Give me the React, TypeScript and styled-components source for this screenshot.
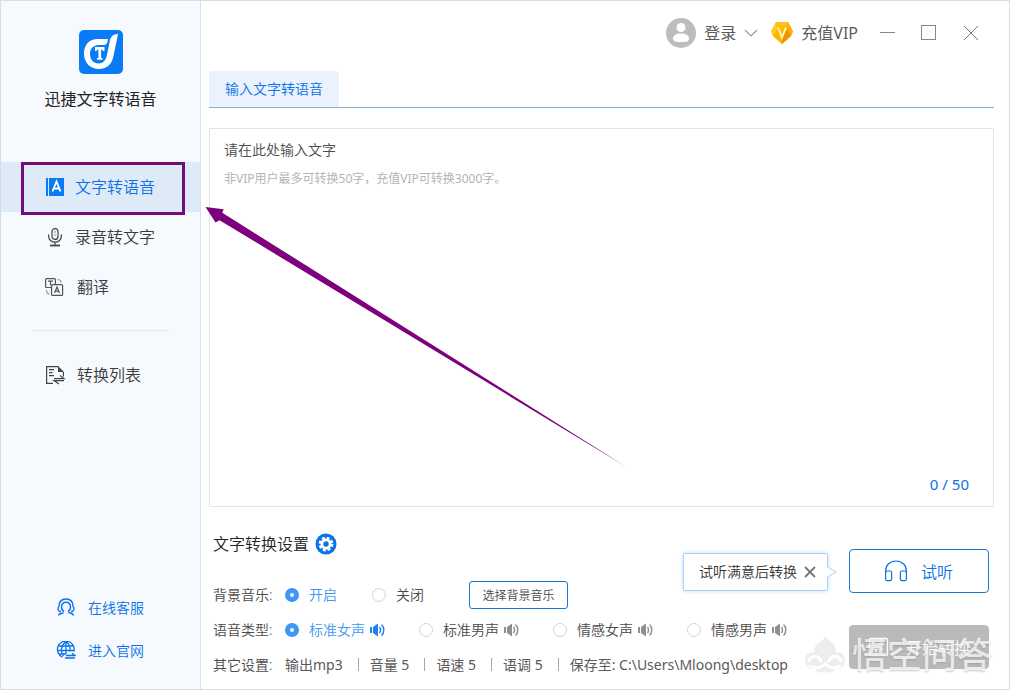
import React, { useState } from "react";
import styled, { createGlobalStyle } from "styled-components";

const Global = createGlobalStyle`
  *, *::before, *::after { box-sizing: border-box; }
  body { margin: 0; background: #fff; }
  body, button, input, textarea {
    font-family: "Noto Sans", "Noto Sans CJK SC", sans-serif;
    font-weight: 350;
  }
  button { cursor: pointer; }
`;

const BLUE = "#0b72e7";

const Window = styled.div`
  position: relative;
  display: flex;
  min-height: 100vh;
  border: 1px solid #d9dce0;
  color: #4a4a4a;
  font-size: 14px;
  line-height: 20px;
`;

const Sidebar = styled.aside`
  display: flex;
  flex-direction: column;
  flex: none;
  width: 200px;
  padding: 29px 0 28px;
  background: #f6faff;
  border-right: 1px solid #d3e2ee;
`;

const Brand = styled.div`
  display: flex;
  flex-direction: column;
  align-items: center;
  gap: 13px;
  margin-bottom: 51px;
`;

const BrandName = styled.h1`
  margin: 0;
  color: #222;
  font-size: 16px;
  font-weight: 400;
  line-height: 24px;
`;

const Nav = styled.nav`
  display: flex;
  flex-direction: column;
`;

const NavItem = styled.button<{ $active?: boolean }>`
  position: relative;
  display: flex;
  align-items: center;
  gap: 11px;
  height: 50px;
  padding: 0 0 0 43px;
  border: 0;
  background: ${(p) => (p.$active ? "#dfeaf8" : "transparent")};
  color: ${(p) => (p.$active ? BLUE : "#3c3c3c")};
  font-size: 16px;
  line-height: 24px;
  text-align: left;
`;

const Marker = styled.span`
  position: absolute;
  top: 0;
  left: 20px;
  right: 15px;
  height: 53px;
  border: 3px solid #720c78;
  pointer-events: none;
  z-index: 1;
`;

const Divider = styled.hr`
  width: 138px;
  height: 1px;
  margin: 18px 0 19px 31px;
  border: 0;
  background: #e3e9f0;
`;

const SideLinks = styled.div`
  display: flex;
  flex-direction: column;
  gap: 23px;
  margin-top: auto;
  padding-left: 54px;
`;

const SideLink = styled.a`
  display: flex;
  align-items: center;
  gap: 12px;
  color: ${BLUE};
  text-decoration: none;
`;

const Main = styled.main`
  display: flex;
  flex-direction: column;
  flex: 1;
  min-width: 0;
  padding: 0 15px 0 8px;
`;

const TitleBar = styled.header`
  display: flex;
  align-items: center;
  justify-content: flex-end;
  height: 64px;
  margin-bottom: 6px;
  padding-right: 15px;
`;

const BarButton = styled.button`
  display: flex;
  align-items: center;
  gap: 8px;
  margin-right: 13px;
  padding: 0;
  border: 0;
  background: none;
  color: #5c5c5c;
  font-size: 16px;
  font-weight: 400;
  line-height: 24px;
`;

const WindowButtons = styled.div`
  display: flex;
  gap: 26px;
  margin-left: 9px;
`;

const IconButton = styled.button`
  display: flex;
  padding: 0;
  border: 0;
  background: none;
`;

const Tabs = styled.div`
  display: flex;
  border-bottom: 1px solid #85b3d6;
`;

const Tab = styled.button`
  height: 36px;
  padding: 0 16px;
  border: 0;
  border-radius: 3px 3px 0 0;
  background: #eaf2fe;
  color: ${BLUE};
  font-size: 14px;
  line-height: 20px;
`;

const Editor = styled.section`
  display: grid;
  flex: 1;
  min-height: 240px;
  margin-top: 20px;
  border: 1px solid #dbe5ef;
`;

const EditorInput = styled.textarea`
  grid-area: 1 / 1;
  width: 100%;
  padding: 11px 14px;
  border: 0;
  outline: 0;
  resize: none;
  background: transparent;
  color: #444;
  font-size: 14px;
  line-height: 20px;
  &::placeholder { color: #4a4a4a; opacity: 1; }
`;

const EditorHint = styled.p`
  grid-area: 1 / 1;
  align-self: start;
  margin: 40px 14px 0;
  color: #b4b4b4;
  font-size: 12px;
  font-weight: 400;
  line-height: 20px;
  pointer-events: none;
`;

const Counter = styled.output`
  grid-area: 1 / 1;
  place-self: end;
  margin: 0 24px 12px;
  color: ${BLUE};
  font-size: 15px;
  font-weight: 400;
  line-height: 20px;
`;

const Footer = styled.section`
  display: grid;
  grid-template-columns: minmax(0, 1fr) 140px;
  padding: 24px 5px 7px 4px;
`;

const Settings = styled.div`
  display: flex;
  flex-direction: column;
  min-width: 0;
  white-space: nowrap;
`;

const SettingsTitle = styled.h2`
  display: flex;
  align-items: center;
  gap: 6px;
  margin: 0 0 20px;
  color: #222;
  font-size: 16px;
  font-weight: 350;
  line-height: 26px;
`;

const Row = styled.div`
  display: flex;
  align-items: center;
  height: 35px;
`;

const RowLabel = styled.span`
  flex: none;
  width: 72px;
`;

const Option = styled.label<{ $width: number; $on: boolean }>`
  display: flex;
  align-items: center;
  flex: none;
  width: ${(p) => p.$width}px;
  color: ${(p) => (p.$on ? "#3e97f7" : "#4a4a4a")};
`;

const Radio = styled.input`
  appearance: none;
  width: 14px;
  height: 14px;
  margin: 0 10px 0 0;
  border: 1px solid #d4d4d4;
  border-radius: 50%;
  background: #fff;
  &:checked { border: 5px solid #3e97f7; }
`;

const SpeakerButton = styled.button`
  display: flex;
  padding: 0 0 0 5px;
  border: 0;
  background: none;
`;

const MusicButton = styled.button`
  height: 28px;
  margin-left: 10px;
  padding: 0;
  width: 99px;
  border: 1px solid #1c78cf;
  border-radius: 3px;
  background: #fff;
  color: #4a4a4a;
  font-size: 12px;
`;

const Detail = styled.span`
  display: flex;
  align-items: center;
  color: #5a5a5a;
  font-weight: 400;
  &:not(:last-child)::after {
    content: "";
    width: 1px;
    height: 13px;
    margin: 0 11px 0 15px;
    background: #a8a8a8;
  }
`;

const Actions = styled.div`
  display: flex;
  flex-direction: column;
  gap: 32px;
  padding-top: 18px;
`;

const ActionSlot = styled.div`
  position: relative;
`;

const ActionButton = styled.button<{ $muted?: boolean }>`
  display: flex;
  align-items: center;
  gap: ${(p) => (p.$muted ? 17 : 13)}px;
  width: 100%;
  height: 44px;
  padding: 0 0 0 ${(p) => (p.$muted ? 18 : 34)}px;
  border: 1px solid ${(p) => (p.$muted ? "#bababa" : "#1c78cf")};
  border-radius: 4px;
  background: ${(p) => (p.$muted ? "#bababa" : "#fff")};
  color: ${(p) => (p.$muted ? "#fff" : BLUE)};
  font-size: 16px;
`;

const Bubble = styled.div`
  position: absolute;
  top: 4px;
  right: 161px;
  display: flex;
  align-items: center;
  gap: 7px;
  width: 145px;
  height: 38px;
  padding-left: 15px;
  border: 1px solid #acd0f6;
  border-radius: 2px;
  background: #fff;
  box-shadow: 0 0 4px #bcdafa;
  color: #333;
  white-space: nowrap;
`;

const BubbleTip = styled.svg`
  position: absolute;
  left: 142px;
  top: 9px;
`;

const Watermark = styled.div`
  position: absolute;
  right: 17px;
  bottom: 12px;
  display: flex;
  align-items: center;
  gap: 6px;
  color: rgba(255, 255, 255, 0.75);
  font-size: 35px;
  font-weight: 500;
  line-height: 44px;
  text-shadow: 0 1px 2px rgba(130, 130, 130, 0.45);
  pointer-events: none;
`;

const Pointer = styled.svg`
  position: absolute;
  left: 203px;
  top: 204px;
  pointer-events: none;
`;

const Logo = () => (
  <svg width="44" height="44" viewBox="0 0 44 44" aria-hidden="true">
    <rect width="44" height="44" rx="5" fill="#087bf5" />
    <path
      d="M29 9H19C10 9 5 15 5 23.500c0 9 6 15.500 15 15.500 8 0 13-5 14.500-13L39 4c-4 0-7 2-8 6l-3 15c-1 5-4 8.500-8.500 8.500-5 0-8.500-4-8.500-9.500 0-5.500 3.500-9 9-9h5.500c2 0 3.200-3 3.500-6z"
      fill="#fff"
    />
    <path d="M16 17h9.500v4H24l-.5-1.300h-1.400V28h1.400v1.800h-5.500V28h1.400v-8.300H18L17.500 21H16z" fill="#fff" />
  </svg>
);

const BookIcon = () => (
  <svg width="20" height="20" viewBox="0 0 20 20" aria-hidden="true">
    <path d="M2 1h2v18H2zM5 1h15v18H5z" fill="#087bf5" />
    <path d="M8.500 14.500 12.500 4.500 16.500 14.500M9.800 11.500h5.400" fill="none" stroke="#fff" strokeWidth="1.800" />
  </svg>
);

const MicIcon = () => (
  <svg width="20" height="20" viewBox="0 0 20 20" fill="none" stroke="#444" strokeWidth="1.200" aria-hidden="true">
    <rect x="8" y="1.600" width="6" height="10.800" rx="3" />
    <path d="M4.600 7.500v1.700a6.400 6 0 0 0 12.800 0V7.500M11 15.200v3" />
    <path d="M6 18.500h10" strokeWidth="1.800" />
    <path d="M11 4.500v1M11 7.500v1" />
  </svg>
);

const TranslateIcon = () => (
  <svg width="22" height="20" viewBox="0 0 22 20" fill="none" stroke="#555" strokeWidth="1.200" aria-hidden="true">
    <path d="M7.500 10.500h-5A1 1 0 0 1 1.600 9.500V2.600a1 1 0 0 1 1-1h7.800a1 1 0 0 1 1 1V7.500" />
    <rect x="7.600" y="7.600" width="11" height="10.800" rx="1" />
    <path d="M4 4.200h5M6.500 4.200V8.500M10.500 16l2.500-6 2.500 6M11.300 14.200h3.400" />
    <path d="M13.500 2.500c2 0 3.500 1 3.500 3.200M2.500 13c0 2.500 1.200 4 3.500 4" stroke="#999" />
  </svg>
);

const ListIcon = () => (
  <svg width="22" height="20" viewBox="0 0 22 20" fill="none" stroke="#444" strokeWidth="1.200" aria-hidden="true">
    <path d="M9 18.400H2.600V1.600h12M19.400 7v4.500" />
    <path d="M14 1v6h6z" fill="#444" stroke="none" />
    <path d="M5 4.600h5M5 7.600h3.500M5 10.600h5" />
    <path d="M10 13.600h10l-4-3M20 15.600H10l5 3.400" />
  </svg>
);

const ServiceIcon = () => (
  <svg width="21" height="20" viewBox="0 0 21 20" fill="none" stroke={BLUE} strokeWidth="1.400" aria-hidden="true">
    <path d="M6 13.500H4.500C2.800 12.500 2.600 9.500 4 8.500 4 4 6.500 1 11 1s7 3 7 7.500c1.400 1 1.200 4-.5 5H16" />
    <path d="M9 13.500C7.300 12.800 6.500 11 6.500 9c0-3 1.700-4.800 4.500-4.800s4.500 1.800 4.500 4.800c0 2-.8 3.800-2.500 4.500M3.500 17.500c.5-1.500 2-2.300 5-2.500M13.500 14.500c3 .5 4.500 1.500 5 3" />
  </svg>
);

const GlobeIcon = () => (
  <svg width="21" height="20" viewBox="0 0 21 20" fill="none" stroke={BLUE} strokeWidth="1.300" aria-hidden="true">
    <path d="M7.500 16.200A8.400 8.400 0 1 1 19 10.500M4 5h14M2.500 9.500h16.500M4 13h7M11 .5V13M8.500 15c-3.500-4.500-2.500-10.500 2.500-14.500 4 3 4.500 6 4 10" />
    <path d="M11 14.500h9l-3-2.300M20 17H10" />
  </svg>
);

const AvatarIcon = () => (
  <svg width="30" height="30" viewBox="0 0 30 30" aria-hidden="true">
    <circle cx="15" cy="15" r="15" fill="#bdbdbd" />
    <circle cx="15" cy="9.500" r="4.500" fill="#fff" />
    <path d="M7 20.500c0-3 3-5 8-5s8 2 8 5-3 3.500-8 3.500-8-.5-8-3.500z" fill="#fff" />
  </svg>
);

const GemIcon = () => (
  <svg width="22" height="22" viewBox="0 0 22 22" aria-hidden="true">
    <path d="M5 0h12l5 9.500-2 4.500-9 8-9-8-2-4.500z" fill="#fdb913" />
    <path d="M5 0h12l-3 4H8z" fill="#fdc020" />
    <path d="M17 0l5 9.500-2 4.500-4-7z" fill="#f9b000" />
    <path d="M20 14l-9 8v-6l5-9z" fill="#ee9200" />
    <path d="M2 14l9 8v-6L6 7z" fill="#ffb400" />
    <path d="M5 0 0 9.500 2 14l4-7z" fill="#ffcc1e" />
    <path d="M7 5.500l4 10 4-10" fill="none" stroke="#fff6a8" strokeWidth="2" />
  </svg>
);

const GearIcon = () => (
  <svg width="22" height="22" viewBox="0 0 22 22" aria-hidden="true">
    <circle cx="11" cy="11" r="10.500" fill="#0b72e7" />
    <circle cx="11" cy="11" r="5.500" fill="#fff" />
    <circle cx="11" cy="11" r="6" fill="none" stroke="#fff" strokeWidth="2.800" strokeDasharray="2.800 1.912" />
    <circle cx="11" cy="11" r="2.700" fill="#0b72e7" />
  </svg>
);

const SpeakerIcon = ({ color }: { color: string }) => (
  <svg width="15" height="14" viewBox="0 0 15 14" fill="none" stroke={color} aria-hidden="true">
    <path d="M0 4h2v6H0zM3 4l5-3.500v13L3 10z" fill={color} stroke="none" />
    <path d="M9.500 4c1.300 1.500 1.300 4.500 0 6M11.500 1.500c3 2.500 3 8.500 0 11" strokeWidth="1.500" />
  </svg>
);

const HeadphonesIcon = () => (
  <svg width="24" height="22" viewBox="0 0 24 22" fill="none" stroke={BLUE} strokeWidth="1.200" aria-hidden="true">
    <path d="M1.600 12.500V11C1.600 5 6 1 12 1s10.400 4 10.400 10v1.500" />
    <rect x="1.600" y="11" width="6" height="9.600" rx="1.600" />
    <rect x="16.400" y="11" width="6" height="9.600" rx="1.600" />
  </svg>
);

const ConvertIcon = () => (
  <svg width="21" height="20" viewBox="0 0 21 20" fill="none" stroke="#fff" strokeWidth="1.400" aria-hidden="true">
    <rect x="1.500" y="1.500" width="18" height="17" rx="1.500" />
    <path d="M6 7h9l-3-3M15 12H6l3 3" />
  </svg>
);

const CloudFace = () => (
  <svg width="42" height="40" viewBox="0 0 42 40" aria-hidden="true">
    <path
      d="M21 1c1 4 8 4 10 11 1 2 1 3 0 5 6 0 10 3 10 8 0 6-5 10-10 9-3 5-7 4-10 2-3 2-7 3-10-2-5 1-10-3-10-9 0-5 4-8 10-8-3-8 8-9 10-16z"
      fill="#e9e9e9"
      opacity=".8"
    />
    <path
      d="M5 26c2-6 10-6 12 0M25 26c2-6 10-6 12 0M6 31c5 3 11 2 15-2 4 4 10 5 15 2"
      fill="none"
      stroke="#fff"
      strokeWidth="3"
      strokeLinecap="round"
    />
  </svg>
);

const VOICES = ["标准女声", "标准男声", "情感女声", "情感男声"];
const MUSIC = ["开启", "关闭"];
const DETAILS = ["输出mp3", "音量 5", "语速 5", "语调 5", "保存至: C:\\Users\\Mloong\\desktop"];

export default function App() {
  const [text, setText] = useState("");
  const [music, setMusic] = useState(MUSIC[0]);
  const [voice, setVoice] = useState(VOICES[0]);

  return (
    <>
      <Global />
      <Window>
        <Sidebar>
          <Brand>
            <Logo />
            <BrandName>迅捷文字转语音</BrandName>
          </Brand>
          <Nav>
            <NavItem $active>
              <BookIcon />
              文字转语音
              <Marker />
            </NavItem>
            <NavItem>
              <MicIcon />
              录音转文字
            </NavItem>
            <NavItem>
              <TranslateIcon />
              翻译
            </NavItem>
            <Divider />
            <NavItem>
              <ListIcon />
              转换列表
            </NavItem>
          </Nav>
          <SideLinks>
            <SideLink href="#service">
              <ServiceIcon />
              在线客服
            </SideLink>
            <SideLink href="#site">
              <GlobeIcon />
              进入官网
            </SideLink>
          </SideLinks>
        </Sidebar>

        <Main>
          <TitleBar>
            <BarButton>
              <AvatarIcon />
              登录
              <svg width="14" height="8" viewBox="0 0 14 8" fill="none" stroke="#999" strokeWidth="1.200" aria-hidden="true">
                <path d="M1 1l6 6 6-6" />
              </svg>
            </BarButton>
            <BarButton>
              <GemIcon />
              充值VIP
            </BarButton>
            <WindowButtons>
              <IconButton aria-label="最小化">
                <svg width="15" height="16" viewBox="0 0 15 16" stroke="#8a8a8a">
                  <path d="M0 7.500h15" />
                </svg>
              </IconButton>
              <IconButton aria-label="最大化">
                <svg width="16" height="16" viewBox="0 0 16 16" stroke="#888" fill="none">
                  <rect x=".5" y=".5" width="14" height="14" />
                </svg>
              </IconButton>
              <IconButton aria-label="关闭窗口">
                <svg width="16" height="16" viewBox="0 0 16 16" stroke="#777" fill="none">
                  <path d="M1 1l14 14M15 1L1 15" />
                </svg>
              </IconButton>
            </WindowButtons>
          </TitleBar>

          <Tabs role="tablist">
            <Tab role="tab" aria-selected="true">输入文字转语音</Tab>
          </Tabs>

          <Editor>
            <EditorInput
              aria-label="输入文字"
              placeholder="请在此处输入文字"
              maxLength={50}
              value={text}
              onChange={(e) => setText(e.target.value)}
            />
            {!text && <EditorHint>非VIP用户最多可转换50字，充值VIP可转换3000字。</EditorHint>}
            <Counter>{text.length} / 50</Counter>
          </Editor>

          <Footer>
            <Settings>
              <SettingsTitle>
                文字转换设置
                <IconButton aria-label="设置">
                  <GearIcon />
                </IconButton>
              </SettingsTitle>
              <Row>
                <RowLabel>背景音乐:</RowLabel>
                {MUSIC.map((m) => (
                  <Option key={m} $width={87} $on={m === music}>
                    <Radio type="radio" name="music" checked={m === music} onChange={() => setMusic(m)} />
                    {m}
                  </Option>
                ))}
                <MusicButton>选择背景音乐</MusicButton>
              </Row>
              <Row>
                <RowLabel>语音类型:</RowLabel>
                {VOICES.map((v) => (
                  <Option key={v} $width={134} $on={v === voice}>
                    <Radio type="radio" name="voice" checked={v === voice} onChange={() => setVoice(v)} />
                    {v}
                    <SpeakerButton aria-label={"播放" + v}>
                      <SpeakerIcon color={v === voice ? "#1b82ee" : "#8f8f8f"} />
                    </SpeakerButton>
                  </Option>
                ))}
              </Row>
              <Row>
                <RowLabel>其它设置:</RowLabel>
                {DETAILS.map((d) => (
                  <Detail key={d}>{d}</Detail>
                ))}
              </Row>
            </Settings>
            <Actions>
              <ActionSlot>
                <Bubble>
                  试听满意后转换
                  <IconButton aria-label="关闭提示">
                    <svg width="12" height="12" viewBox="0 0 12 12" stroke="#777" strokeWidth="1.800">
                      <path d="M1 1l10 10M11 1L1 11" />
                    </svg>
                  </IconButton>
                  <BubbleTip width="12" height="18" viewBox="0 0 12 18" aria-hidden="true">
                    <path d="M0 1h1.500v3L10 9l-8.500 5v3H0z" fill="#fff" />
                    <path d="M1.500 1v3L10 9l-8.500 5v3" fill="none" stroke="#acd0f6" />
                  </BubbleTip>
                </Bubble>
                <ActionButton>
                  <HeadphonesIcon />
                  试听
                </ActionButton>
              </ActionSlot>
              <ActionButton $muted>
                <ConvertIcon />
                开始转换
              </ActionButton>
            </Actions>
          </Footer>
        </Main>

        <Pointer width="424" height="264" viewBox="0 0 424 264" aria-hidden="true">
          <path d="M1.500 2 19.700 4.300 18.300 7.700 422.500 262 15.500 15.200 11.500 17.500z" fill="#7d007d" />
        </Pointer>
        <Watermark>
          <CloudFace />
          悟空问答
        </Watermark>
      </Window>
    </>
  );
}
